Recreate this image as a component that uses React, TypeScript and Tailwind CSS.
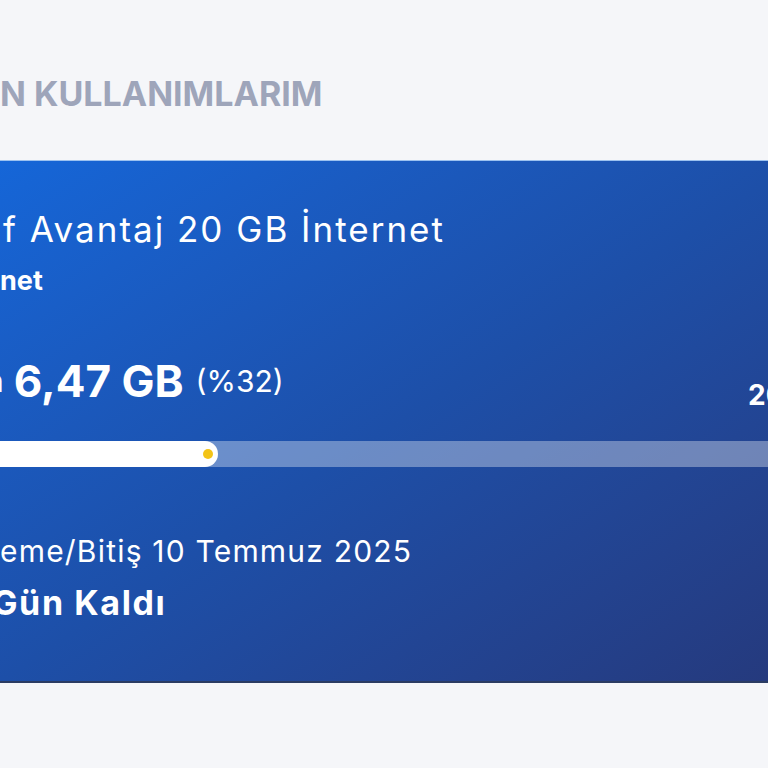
import React from 'react';

const usage = { used: 6.47, total: 20, percent: 32 };

export default function App() {
  return (
    <div
      className="w-[768px] h-[768px] overflow-hidden bg-[#f5f6f9]"
      style={{ fontFamily: 'Inter, "Noto Sans", sans-serif' }}
    >
      <div className="pt-[74px] h-[160px]">
        <h2 className="text-[34px] leading-[40px] font-bold text-[#9ea5ba] whitespace-nowrap">
          N KULLANIMLARIM
        </h2>
      </div>

      <div className="h-[523px] w-[800px] bg-linear-to-br from-[#1566d8] via-[#1d4fa8] to-[#25397c] border-t border-[#9cc2f0] border-b-2 border-b-[#2b3c63] text-white pt-[48px]">
        <p className="text-[35px] leading-[40px] tracking-[2px] whitespace-nowrap pl-[3px]">f Avantaj 20 GB İnternet</p>
        <p className="text-[27px] leading-[32px] font-bold whitespace-nowrap mt-[16px]">net</p>

        <div className="flex items-end w-[768px] mt-[60px] h-[48px] whitespace-nowrap">
          <span className="text-[30px] leading-[48px] -ml-[14px]">n</span>
          <span className="text-[44px] leading-[48px] font-bold ml-[10px]">
            {usage.used.toFixed(2).replace('.', ',')} GB
          </span>
          <span className="text-[30px] leading-[48px] ml-[12px]">(%{usage.percent})</span>
          <span className="ml-auto -mr-[72px] w-[92px] text-[28px] leading-[40px] font-bold mb-[-10px]">
            {usage.total} GB
          </span>
        </div>

        <div className="relative mt-[36px] h-[26px] w-[800px] rounded-full bg-white/35">
          <div className="absolute left-[-40px] top-0 h-[26px] w-[258px] rounded-full bg-white" />
          <div className="absolute left-[203px] top-[8px] h-[10px] w-[10px] rounded-full bg-[#f3c417]" />
        </div>

        <p className="mt-[66px] text-[30px] leading-[36px] tracking-[1.2px] whitespace-nowrap">eme/Bitiş 10 Temmuz 2025</p>
        <p className="mt-[14px] text-[34px] leading-[40px] tracking-[1.6px] font-bold whitespace-nowrap -ml-[8px]">Gün Kaldı</p>
      </div>
    </div>
  );
}
